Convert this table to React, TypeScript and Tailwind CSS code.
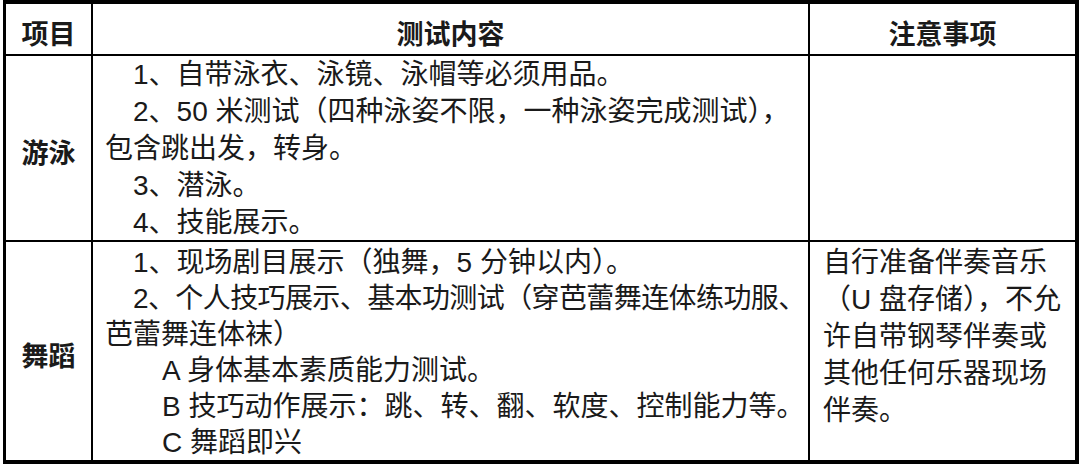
import React from 'react';

const font = { fontFamily: '"Liberation Sans", "Noto Sans CJK SC", sans-serif' };

type Line = { text: string; indent: 0 | 1 | 2; tight?: boolean };

const swimLines: Line[] = [
  { text: '1、自带泳衣、泳镜、泳帽等必须用品。', indent: 1 },
  { text: '2、50 米测试（四种泳姿不限，一种泳姿完成测试），', indent: 1 },
  { text: '包含跳出发，转身。', indent: 0 },
  { text: '3、潜泳。', indent: 1 },
  { text: '4、技能展示。', indent: 1 },
];

const danceLines: Line[] = [
  { text: '1、现场剧目展示（独舞，5 分钟以内）。', indent: 1 },
  { text: '2、个人技巧展示、基本功测试（穿芭蕾舞连体练功服、', indent: 1, tight: true },
  { text: '芭蕾舞连体袜）', indent: 0 },
  { text: 'A 身体基本素质能力测试。', indent: 2 },
  { text: 'B 技巧动作展示：跳、转、翻、软度、控制能力等。', indent: 2 },
  { text: 'C 舞蹈即兴', indent: 2 },
];

const danceNotes = ['自行准备伴奏音乐', '（U 盘存储），不允', '许自带钢琴伴奏或', '其他任何乐器现场', '伴奏。'];

function ContentLines({ lines, lh }: { lines: Line[]; lh: string }) {
  return (
    <>
      {lines.map((l) => (
        <div
          key={l.text}
          className={`whitespace-nowrap ${lh} ${
            l.indent === 2 ? 'pl-[57px]' : l.indent === 1 ? 'pl-[28px]' : 'pl-0'
          } ${l.tight ? 'tracking-[-0.6px]' : ''}`}
        >
          {l.text}
        </div>
      ))}
    </>
  );
}

export default function App() {
  return (
    <div className="w-[1080px] h-[465px] bg-white text-[#1a1a1a]" style={font}>
      <div className="ml-[3px] w-[1076px] border-t-4 border-l-[3px] border-r-4 border-b-4 border-black">
        <div className="grid grid-cols-[87px_717px_265px] grid-rows-[52px_186px_218px]">
          {/* header */}
          <div className="border-r-2 border-b-2 border-black text-center font-bold text-[27px] leading-[28px] pt-[17px]">
            项目
          </div>
          <div className="border-r-2 border-b-2 border-black text-center font-bold text-[27px] leading-[28px] pt-[17px]">
            测试内容
          </div>
          <div className="border-b-2 border-black text-center font-bold text-[27px] leading-[28px] pt-[17px]">
            注意事项
          </div>

          {/* 游泳 */}
          <div className="border-r-2 border-b-2 border-black flex items-center justify-center pt-[12px] font-bold text-[27px]">
            游泳
          </div>
          <div className="border-r-2 border-b-2 border-black pl-[12px] text-[28px]">
            <ContentLines lines={swimLines} lh="leading-[37px]" />
          </div>
          <div className="border-b-2 border-black" />

          {/* 舞蹈 */}
          <div className="border-r-2 border-black flex items-center justify-center pt-[12px] font-bold text-[27px]">
            舞蹈
          </div>
          <div className="border-r-2 border-black pl-[12px] pt-[3px] text-[28px]">
            <ContentLines lines={danceLines} lh="leading-[36px]" />
          </div>
          <div className="pl-[13px] pt-[2px] text-[28px]">
            {danceNotes.map((n) => (
              <div key={n} className="whitespace-nowrap leading-[37px]">
                {n}
              </div>
            ))}
          </div>
        </div>
      </div>
    </div>
  );
}
